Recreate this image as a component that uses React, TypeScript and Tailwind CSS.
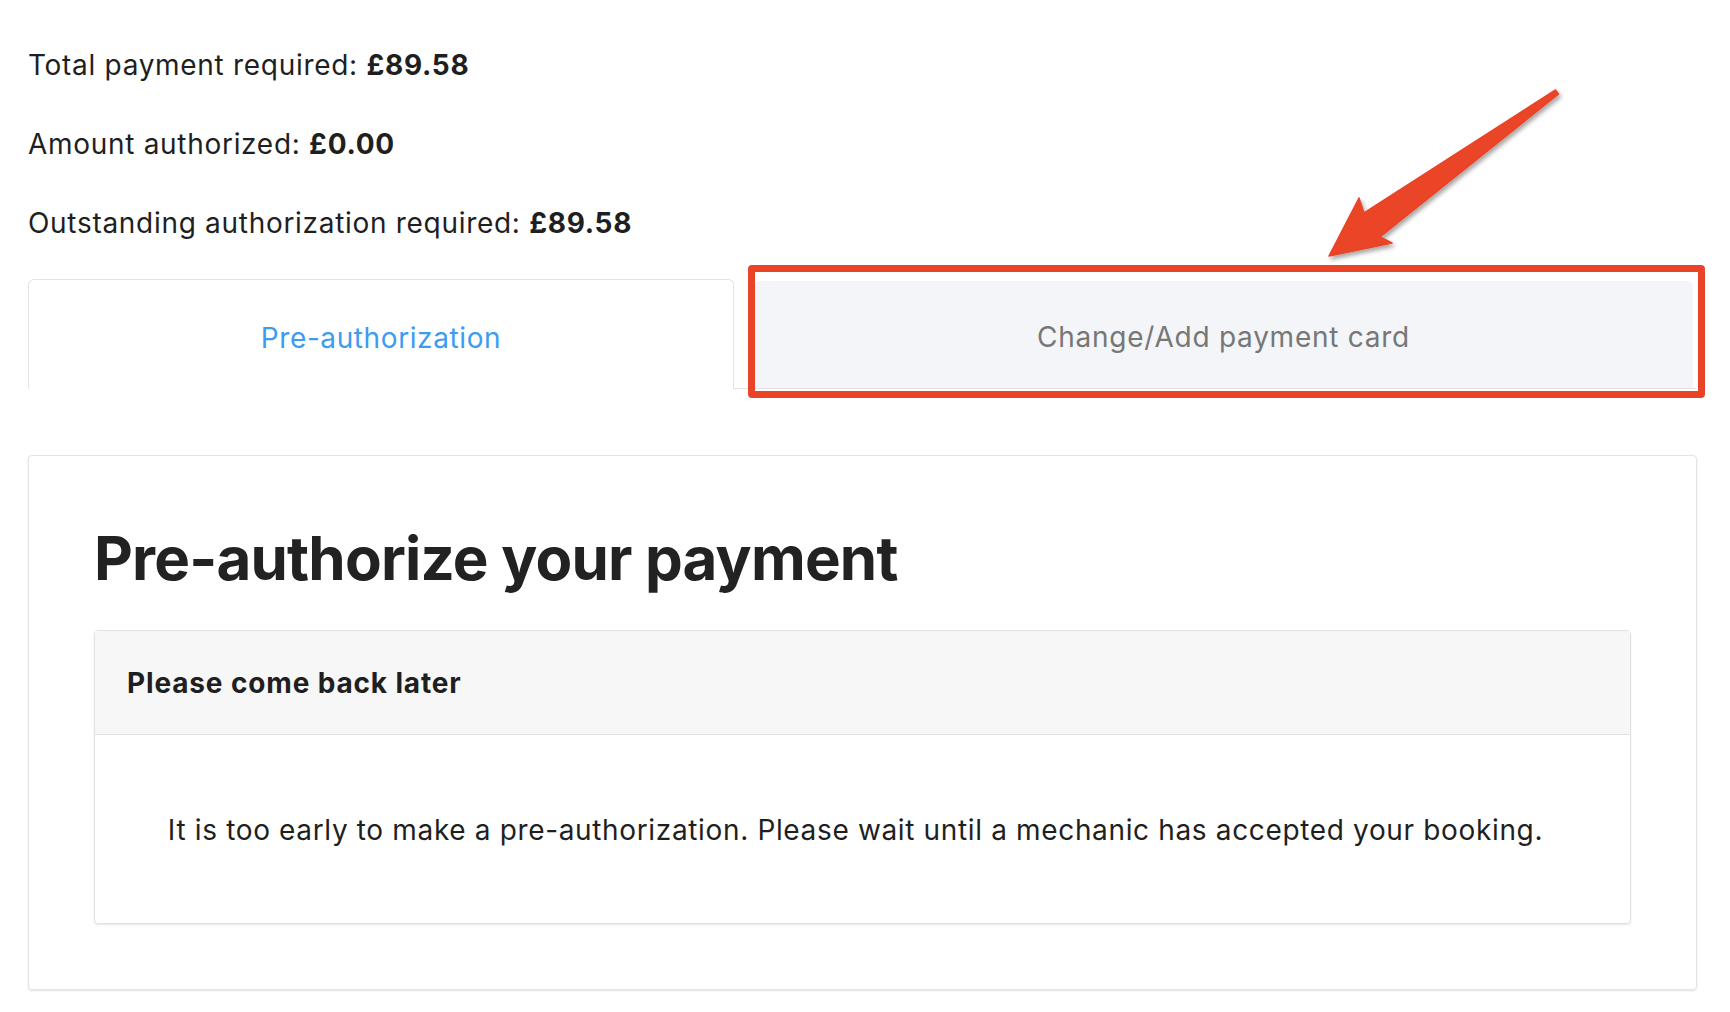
const font = { fontFamily: "Inter, 'Open Sans', sans-serif" };

const Arrow = () => (
  <svg
    className="absolute left-0 top-0 pointer-events-none"
    width={1730}
    height={420}
    viewBox="0 0 1730 420"
  >
    <defs>
      <filter id="arrowShadow" x="-10%" y="-10%" width="130%" height="130%">
        <feDropShadow dx="2" dy="3" stdDeviation="2" floodColor="#000" floodOpacity="0.35" />
      </filter>
    </defs>
    <polygon
      points="1555.5,90 1364,213 1359,198 1329,256 1392,243 1380,237 1558.5,94"
      fill="#e94427"
      stroke="#e94427"
      strokeWidth="1.5"
      strokeLinejoin="round"
      filter="url(#arrowShadow)"
    />
  </svg>
);

const Line = ({ label, value }: { label: string; value: string }) => (
  <div className="text-[28px] leading-[28px] tracking-[0.7px] text-[#1f1f1f]">
    {label} <span className="font-bold">{value}</span>
  </div>
);

export default function App() {
  return (
    <div className="relative min-h-screen bg-white px-[28px] pt-[51px]" style={font}>
      <div className="flex flex-col gap-[51px]">
        <Line label="Total payment required:" value="£89.58" />
        <Line label="Amount authorized:" value="£0.00" />
        <Line label="Outstanding authorization required:" value="£89.58" />
      </div>

      <div className="relative mt-[42px] flex w-[1668px] border-b border-[#e4e4e4]">
        <div className="relative -mb-px flex h-[110px] w-[706px] items-center justify-center rounded-t-[6px] border border-b-0 border-[#e4e4e4] bg-white pt-[6px] text-[28px] tracking-[0.6px] text-[#3d9bf2]">
          Pre-authorization
        </div>
        <div className="ml-[20px] mt-[2px] flex h-[107px] w-[939px] items-center justify-center rounded-t-[6px] bg-[#f3f5f8] pt-[5px] text-[28px] tracking-[0.75px] text-[#777777]">
          Change/Add payment card
        </div>
        <div className="absolute left-[720px] top-[-14px] h-[133px] w-[957px] rounded-[4px] border-[7px] border-[#e94427]" />
      </div>

      <div className="mt-[66px] w-[1669px] rounded-[4px] border border-[#e4e4e4] px-[65px] pb-[65px] pt-[72px] shadow-[0_1px_2px_rgba(0,0,0,0.12)]">
        <h1 className="text-[60px] font-bold leading-[61px] tracking-[-0.8px] text-[#222222]">
          Pre-authorize your payment
        </h1>
        <div className="mt-[41px] rounded-[4px] border border-[#e2e2e2] shadow-[0_1px_2px_rgba(0,0,0,0.1)]">
          <div className="border-b border-[#e2e2e2] bg-[#f7f7f7] px-[32px] pb-[37px] pt-[38px] text-[28px] font-bold leading-[28px] tracking-[0.85px] text-[#1f1f1f]">
            Please come back later
          </div>
          <div className="pb-[79px] pl-[25px] pr-[39px] pt-[81px] text-center text-[28px] leading-[28px] tracking-[0.65px] text-[#1f1f1f]">
            It is too early to make a pre-authorization. Please wait until a mechanic has accepted your booking.
          </div>
        </div>
      </div>

      <Arrow />
    </div>
  );
}
